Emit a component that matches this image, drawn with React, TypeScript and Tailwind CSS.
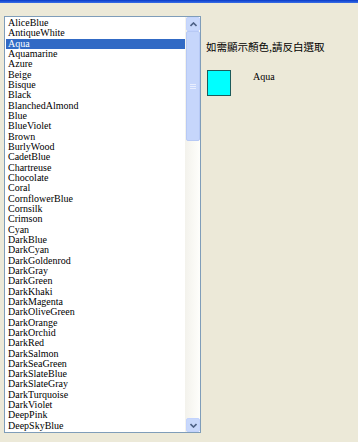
const colors = [
    "AliceBlue", "AntiqueWhite", "Aqua", "Aquamarine", "Azure", "Beige", "Bisque", "Black",
    "BlanchedAlmond", "Blue", "BlueViolet", "Brown", "BurlyWood", "CadetBlue", "Chartreuse",
    "Chocolate", "Coral", "CornflowerBlue", "Cornsilk", "Crimson", "Cyan", "DarkBlue", "DarkCyan",
    "DarkGoldenrod", "DarkGray", "DarkGreen", "DarkKhaki", "DarkMagenta", "DarkOliveGreen",
    "DarkOrange", "DarkOrchid", "DarkRed", "DarkSalmon", "DarkSeaGreen", "DarkSlateBlue",
    "DarkSlateGray", "DarkTurquoise", "DarkViolet", "DeepPink", "DeepSkyBlue",
]

const selected = "Aqua"

function Chevron({ up }: { up?: boolean }) {
    return (
        <svg width="7" height="5" viewBox="0 0 7 5" className={up ? "" : "rotate-180"}>
            <path d="M0.5 4 L3.5 1 L6.5 4" fill="none" stroke="#4d6185" strokeWidth="1.6" />
        </svg>
    )
}

function ScrollButton({ up }: { up?: boolean }) {
    return (
        <div className="flex h-[14px] w-[14px] items-center justify-center rounded-[2px] border border-[#c3d3fd] bg-[#c8d8fb]">
            <Chevron up={up} />
        </div>
    )
}

export default function App() {
    return (
        <div className="flex h-[442px] w-[358px] flex-col bg-[#ece9d8] font-['Liberation_Serif',serif]">
            {/* window title strip */}
            <div className="h-[3px] bg-gradient-to-b from-[#0839c8] to-[#3a6fe8]" />

            <div className="flex gap-[5px] pl-[4px] pt-[13px]">
                {/* Listbox */}
                <div className="flex h-[417px] w-[197px] border border-[#7f9db9] bg-white">
                    <ul className="flex-1 pl-[1px] pt-[1px]">
                        {colors.map((c) => (
                            <li
                                key={c}
                                className={
                                    c === selected
                                        ? "h-[10.33px] bg-[#316ac5] pl-[2px] text-[10px] leading-[10.33px] text-white"
                                        : "h-[10.33px] pl-[2px] text-[10px] leading-[10.33px] text-black"
                                }
                            >
                                {c}
                            </li>
                        ))}
                    </ul>

                    {/* Scrollbar */}
                    <div className="flex w-[15px] flex-col bg-gradient-to-r from-[#f3f2ec] to-[#fefefb] pl-[1px]">
                        <ScrollButton up />
                        <div className="flex h-[110px] w-[14px] flex-col items-center justify-center gap-[1px] rounded-[2px] border border-[#b7c9f5] bg-[#c6d6fb]">
                            <div className="h-px w-[6px] bg-[#e8eefe]" />
                            <div className="h-px w-[6px] bg-[#e8eefe]" />
                            <div className="h-px w-[6px] bg-[#e8eefe]" />
                        </div>
                        <div className="flex-1" />
                        <ScrollButton />
                    </div>
                </div>

                {/* Right panel */}
                <div className="flex flex-col pt-[25px]">
                    <p className="font-['Noto_Sans_CJK_TC',sans-serif] text-[10.5px] leading-[12px] text-black">
                        如需顯示顏色,請反白選取
                    </p>
                    <div className="mt-[17px] flex items-start gap-[22px] pl-[1px]">
                        <div className="h-[26px] w-[24px] border border-[#1d5b5b] bg-[#00ffff]" />
                        <span className="pt-[2px] text-[10px] leading-[10px] text-black">{selected}</span>
                    </div>
                </div>
            </div>
        </div>
    )
}
